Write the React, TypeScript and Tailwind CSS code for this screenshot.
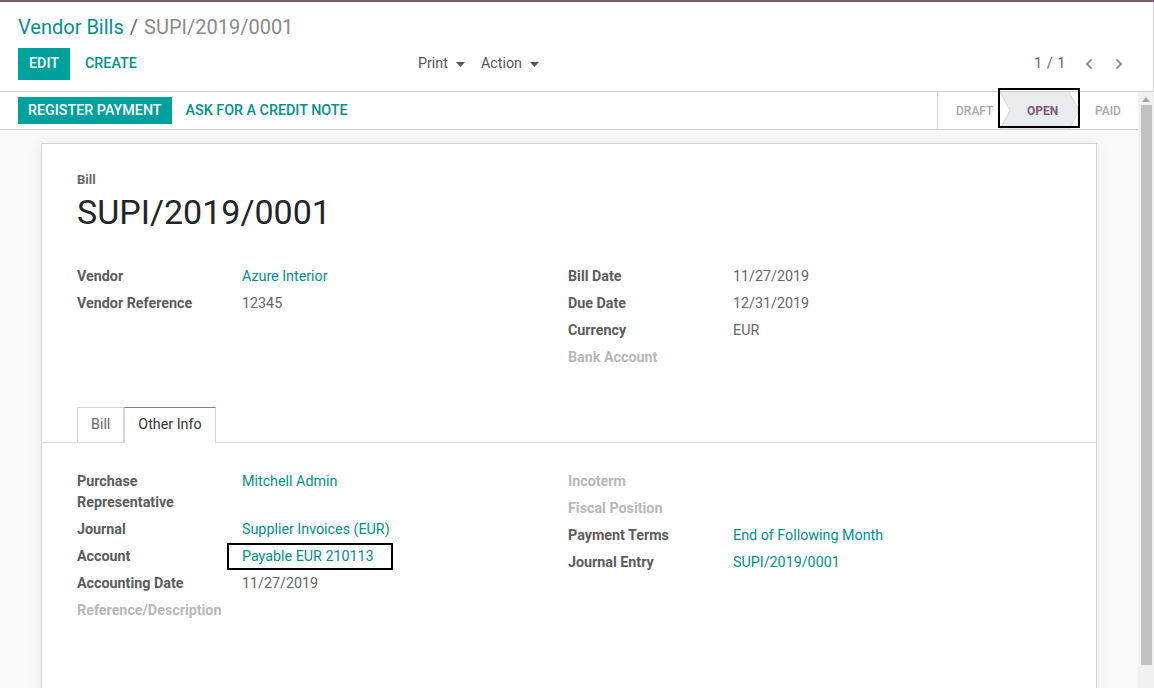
import React from 'react';
import { FaChevronLeft, FaChevronRight } from 'react-icons/fa';

function Caret() {
  return (
    <svg width="9" height="5" viewBox="0 0 9 5" className="ml-[8px] mt-[1px]">
      <polygon points="0,0 9,0 4.5,5" fill="#555" />
    </svg>
  );
}

function Field({
  label,
  children,
  faded,
}: {
  label: string;
  children?: React.ReactNode;
  faded?: boolean;
}) {
  return (
    <div className="flex py-[3px] leading-[21px]">
      <div
        className={
          faded
            ? 'w-[165px] shrink-0 pr-[10px] font-bold text-[#b8b8b8]'
            : 'w-[165px] shrink-0 pr-[10px] font-bold text-[#5c5c5c]'
        }
      >
        {label}
      </div>
      <div className="flex-1 text-[#666]">{children}</div>
    </div>
  );
}

function Link({ children }: { children: React.ReactNode }) {
  return <span className="text-[#00918d]">{children}</span>;
}

export default function App() {
  return (
    <div className="w-[1154px] h-[688px] overflow-hidden bg-white font-['Roboto','Liberation_Sans',sans-serif] text-[14.3px]">
      <div className="h-[2px] bg-[#7c5a73]" />
      {/* Control panel */}
      <div className="h-[90px] border-b border-r border-[#cfcfcf] px-[18px] pt-[13px]">
        <div className="text-[20px] leading-[24px] flex items-center">
          <span className="text-[#00918d]">Vendor Bills</span>
          <span className="text-[#666] mx-[6px]">/</span>
          <span className="text-[#8a8a8a]">SUPI/2019/0001</span>
        </div>
        <div className="mt-[8px] flex items-center h-[32px] pt-px">
          <div className="w-[400px] flex items-center h-full">
            <div className="h-[32px] px-[11px] bg-[#00A09D] text-white font-medium flex items-center">
              EDIT
            </div>
            <div className="ml-[15px] text-[#00918d] font-medium">CREATE</div>
          </div>
          <div className="flex items-center text-[#555]">
            <span>Print</span>
            <Caret />
            <span className="ml-[16px]">Action</span>
            <Caret />
          </div>
          <div className="ml-auto flex items-center pr-[10px] text-[#666]">
            <span className="text-[14.5px] tracking-[0.5px]">1 / 1</span>
            <FaChevronLeft className="ml-[17px] text-[#8c8c8c]" size={12} />
            <FaChevronRight className="ml-[18px] text-[#8c8c8c]" size={12} />
          </div>
        </div>
      </div>

      {/* Body row: content + scrollbar */}
      <div className="flex h-[596px]">
        <div className="w-[1138px] flex flex-col">
          {/* Status bar */}
          <div className="h-[38px] border-b border-[#cfcfcf] flex items-center pl-[18px] shrink-0">
            <div className="h-[27px] px-[10px] bg-[#00A09D] text-white font-medium flex items-center">
              REGISTER PAYMENT
            </div>
            <div className="ml-[14px] text-[#00918d] font-medium">ASK FOR A CREDIT NOTE</div>
            <div className="ml-auto flex h-full text-[12px] font-medium">
              <div className="w-[63px] h-full border-l border-[#dcdcdc] flex items-center pl-[18px] text-[#a8a8a8]">
                DRAFT
              </div>
              <div className="relative w-[80px] h-full flex items-center pl-[27px] text-[#7c5a73] font-bold">
                <svg
                  className="absolute left-0 top-0"
                  width="80"
                  height="37"
                  viewBox="0 0 80 37"
                >
                  <polygon points="0,0 69,0 79,18.5 69,37 0,37 10,18.5" fill="#e9ecef" />
                  <polyline points="0,0 10,18.5 0,37" fill="none" stroke="#d5d8dc" strokeWidth="1" />
                  <polyline points="69,0 79,18.5 69,37" fill="none" stroke="#d5d8dc" strokeWidth="1" />
                </svg>
                <span className="relative">OPEN</span>
                <div className="absolute -left-[2px] -top-[4px] w-[82px] h-[40px] border-2 border-black" />
              </div>
              <div className="w-[58px] h-full flex items-center pl-[15px] text-[#a8a8a8]">PAID</div>
            </div>
          </div>

          {/* Sheet background */}
          <div className="flex-1 bg-[#f9f9f9] pt-[13px] px-[41px] overflow-hidden">
            <div className="bg-white border border-[#d4d4d4] shadow-[0_0_14px_rgba(0,0,0,0.07)] h-[600px]">
              <div className="px-[35px] pt-[27px]">
                <div className="text-[13px] leading-[18px] font-bold text-[#666]">Bill</div>
                <div className="mt-[3px] text-[34px] leading-[40px] text-[#212529]">SUPI/2019/0001</div>
                <div className="mt-[31px] flex">
                  <div className="w-[491px]">
                    <Field label="Vendor">
                      <Link>Azure Interior</Link>
                    </Field>
                    <Field label="Vendor Reference">12345</Field>
                  </div>
                  <div className="flex-1">
                    <Field label="Bill Date">11/27/2019</Field>
                    <Field label="Due Date">12/31/2019</Field>
                    <Field label="Currency">EUR</Field>
                    <Field label="Bank Account" faded />
                  </div>
                </div>
              </div>

              {/* Tabs */}
              <div className="mt-[36px] border-b border-[#dcdcdc] pl-[35px] flex items-end h-[36px]">
                <div className="h-[35px] px-[13px] border-t border-l border-r border-[#d6d6d6] flex items-center text-[#666]">
                  Bill
                </div>
                <div className="h-[36px] -mb-px px-[13px] border-t border-t-[#8f7a8a] border-l border-r border-[#d6d6d6] bg-white flex items-center text-[#333] pb-px">
                  Other Info
                </div>
              </div>

              <div className="px-[35px] pt-[25px] flex">
                <div className="w-[491px]">
                  <Field label="Purchase Representative">
                    <Link>Mitchell Admin</Link>
                  </Field>
                  <Field label="Journal">
                    <Link>Supplier Invoices (EUR)</Link>
                  </Field>
                  <Field label="Account">
                    <span className="relative">
                      <Link>Payable EUR 210113</Link>
                      <span className="absolute -left-[15px] -top-[5px] w-[166px] h-[27px] border-2 border-black" />
                    </span>
                  </Field>
                  <Field label="Accounting Date">11/27/2019</Field>
                  <Field label="Reference/Description" faded />
                </div>
                <div className="flex-1">
                  <Field label="Incoterm" faded />
                  <Field label="Fiscal Position" faded />
                  <Field label="Payment Terms">
                    <Link>End of Following Month</Link>
                  </Field>
                  <Field label="Journal Entry">
                    <Link>SUPI/2019/0001</Link>
                  </Field>
                </div>
              </div>
            </div>
          </div>
        </div>

        {/* Fake scrollbar */}
        <div className="w-[16px] h-full bg-[#f1f1f1] flex flex-col items-center">
          <svg width="8" height="5" viewBox="0 0 8 5" className="mt-[5px]">
            <polygon points="0,5 8,5 4,0" fill="#a3a3a3" />
          </svg>
          <div className="mt-[3px] w-[11px] h-[560px] bg-[#c1c1c1]" />
        </div>
      </div>
    </div>
  );
}
